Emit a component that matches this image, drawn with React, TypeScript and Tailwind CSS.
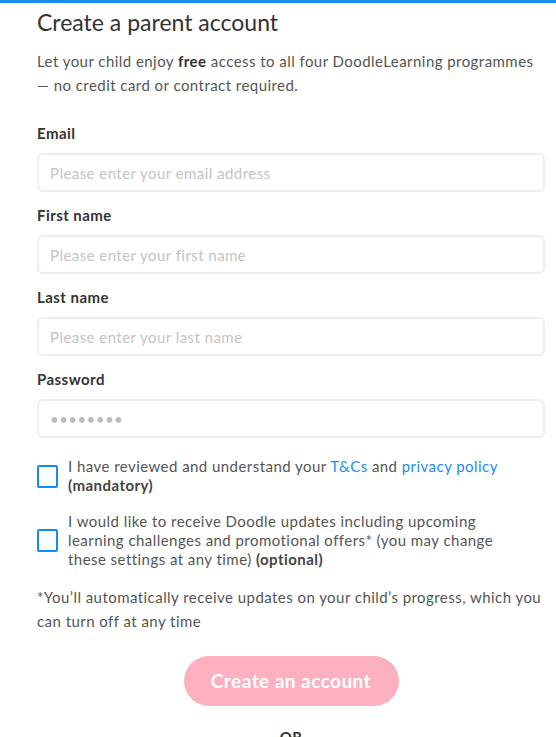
import { useState } from 'react';

const font = { fontFamily: 'Lato, "Open Sans", sans-serif' };

function Field({ label, placeholder, type = 'text' }: { label: string; placeholder: string; type?: string }) {
  return (
    <div className="flex flex-col">
      <label className="text-[15px] font-bold leading-5 text-[#333] mb-[10px]">{label}</label>
      <input
        type={type}
        placeholder={placeholder}
        defaultValue={type === 'password' ? 'password' : undefined}
        className="h-[39px] w-full rounded-md border-2 border-[#eeeeee] px-[11px] text-[15px] tracking-[0.45px] text-[#bbb] placeholder:text-[#c4c4c4] outline-none"
        style={font}
      />
    </div>
  );
}

function Check({ checked, onToggle }: { checked: boolean; onToggle: () => void }) {
  return (
    <button
      onClick={onToggle}
      className="w-[21px] h-[23px] shrink-0 rounded-[2px] border-2 border-[#1a8cf0] bg-white"
    >
      {checked && <span className="block w-full h-full bg-[#1a8cf0]" />}
    </button>
  );
}

export default function App() {
  const [terms, setTerms] = useState(false);
  const [updates, setUpdates] = useState(false);

  return (
    <div className="h-[737px] bg-white overflow-hidden tracking-[0.45px]" style={font}>
      <div className="h-[3px] bg-[#1a8cf0]" />
      <div className="pl-[37px] pr-[11px]">
        <h1 className="text-[23px] leading-8 tracking-normal text-[#333] mt-[3px]">Create a parent account</h1>
        <p className="mt-[11px] text-[15px] leading-6 text-[#555]">
          Let your child enjoy <b className="text-[#333]">free</b> access to all four DoodleLearning programmes — no credit card or contract required.
        </p>

        <div className="mt-[26px] flex flex-col gap-[13px]">
          <Field label="Email" placeholder="Please enter your email address" />
          <Field label="First name" placeholder="Please enter your first name" />
          <Field label="Last name" placeholder="Please enter your last name" />
          <Field label="Password" placeholder="" type="password" />
        </div>

        <div className="mt-[19px] flex items-center gap-[10px]">
          <Check checked={terms} onToggle={() => setTerms(!terms)} />
          <p className="max-w-[445px] text-[15px] leading-[19px] text-[#555]">
            I have reviewed and understand your <a className="text-[#1a8cf0]">T&amp;Cs</a> and <a className="text-[#1a8cf0]">privacy policy</a>{' '}
            <b className="text-[#444]">(mandatory)</b>
          </p>
        </div>

        <div className="mt-[17px] flex items-center gap-[10px]">
          <Check checked={updates} onToggle={() => setUpdates(!updates)} />
          <p className="max-w-[445px] text-[15px] leading-[19px] text-[#555]">
            I would like to receive Doodle updates including upcoming learning challenges and promotional offers* (you may change these settings at any time) <b className="text-[#444]">(optional)</b>
          </p>
        </div>

        <p className="mt-[16px] text-[15px] leading-6 text-[#555]">
          *You’ll automatically receive updates on your child’s progress, which you can turn off at any time
        </p>

        <div className="mt-[23px] flex justify-center">
          <button className="h-[50px] w-[215px] rounded-full bg-[#fcb0c0] text-[19px] font-bold text-white">
            Create an account
          </button>
        </div>

        <div className="mt-[21px] text-center text-[15px] leading-5 text-[#333] font-bold">OR</div>
      </div>
    </div>
  );
}
